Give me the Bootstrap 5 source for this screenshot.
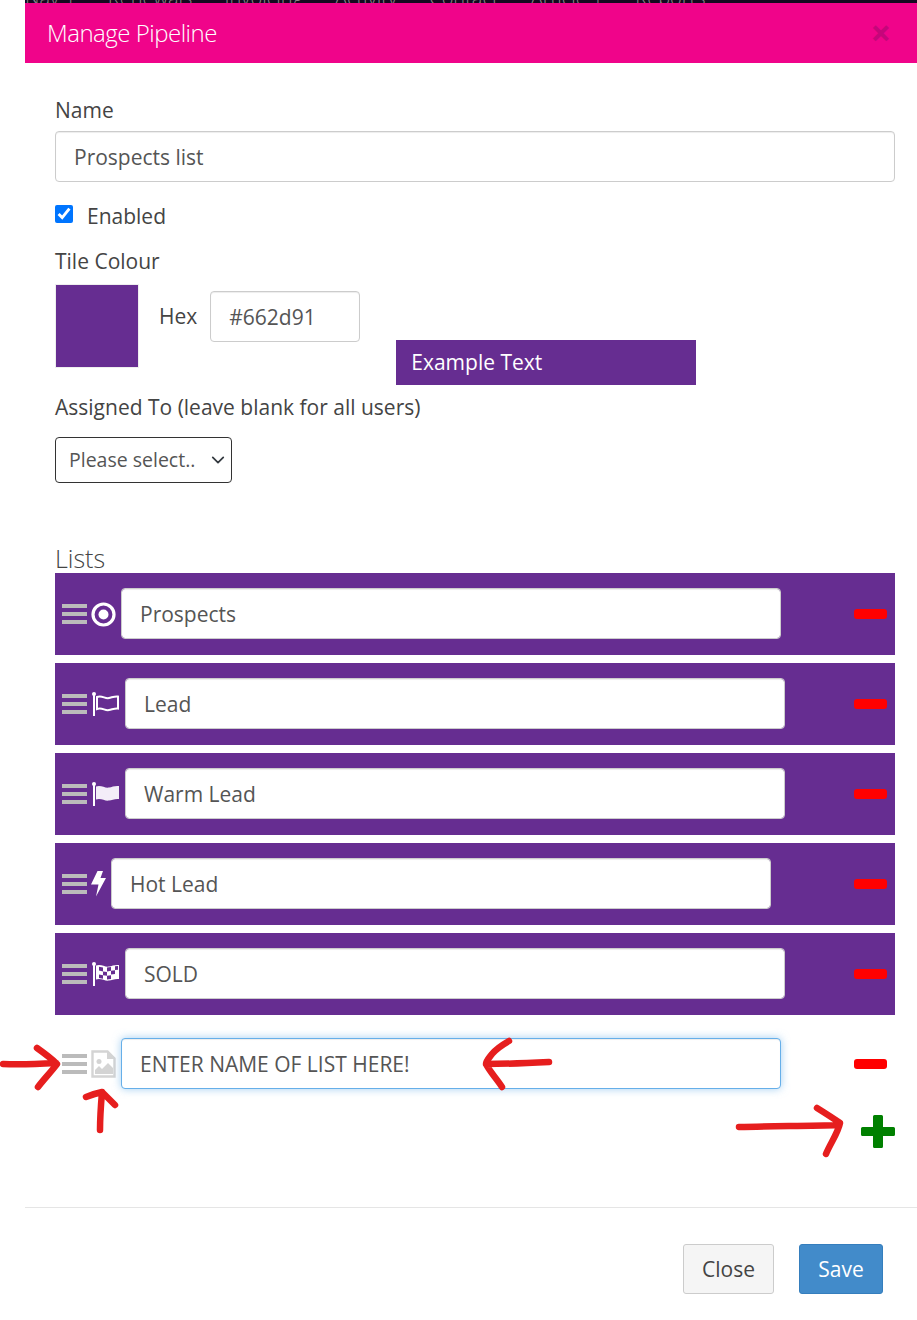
<!DOCTYPE html>
<html lang="en">
<head>
<meta charset="utf-8">
<title>Manage Pipeline</title>
<link href="https://cdn.jsdelivr.net/npm/bootstrap@5.3.0/dist/css/bootstrap.min.css" rel="stylesheet">
<style>
html,body{margin:0;padding:0;background:#fff}
body{font-family:"Open Sans","Liberation Sans",sans-serif;font-size:21px;color:#444;height:1320px;overflow:hidden;position:relative}
.sheet{margin-left:25px;width:892px}
.strip{height:3px;background:#14091f;overflow:hidden;color:#8a8a8a;font-size:20px;font-weight:300;white-space:nowrap;display:flex;align-items:flex-end;gap:32px}
.strip span{line-height:10px;flex:none}
.head-bar{height:60px;background:#f0048a;color:#fff;padding:0 26px 0 22px}
.head-title{font-size:24px;font-weight:300;margin:0;line-height:60px;letter-spacing:-.5px}
.head-x{font-size:36px;color:#c5067a;line-height:1;background:none;border:0;padding:0;font-weight:700}
.form-area{padding:33px 22px 0 30px}
.lbl{display:block;line-height:28px;margin:0 0 7px}
.field.form-control{height:51px;border-radius:4px;border:1px solid #ccc;font-size:21px;color:#555;padding:0 18px;box-shadow:inset 0 1px 1px rgba(0,0,0,.075)}
.check-line{margin:20px 0 0;height:28px}
.check-native{width:18px;height:18px;margin:0 14px 4px 0;flex:none}
.check-line label{line-height:28px}
.lbl-tile{margin:17px 0 9px;line-height:28px;display:block}
.swatch{width:84px;height:84px;background:#662d91;border:1px solid #eee;flex:none}
.hex-word{margin:18px 13px 0 20px;line-height:28px}
.hex-input.form-control{width:150px;margin-top:7px;flex:none}
.sample{width:300px;height:45px;background:#662d91;color:#fff;line-height:45px;padding-left:15px;margin:56px 0 0 36px;flex:none}
.lbl-assign{margin:8px 0 16px;line-height:28px;display:block}
.pick.form-select{width:177px;height:46px;border:1px solid #333;border-radius:4px;font-size:19.500px;color:#555;padding:0 0 0 13px;background-position:right 4px center;background-size:18px 14px}
.lists-head{font-size:25px;font-weight:300;line-height:28px;margin:61px 0 0;height:29px}
.tier{height:82px;margin-bottom:8px;padding:0 8px 0 7px;display:flex;align-items:center}
.tier.tone{background:#662d91}
.grip{width:25px;height:20px;flex:none;margin-right:4px}
.glyph{flex:none;margin-right:5px;display:block}
.glyph-flag{margin-left:1px}
.tier .field{width:660px;flex:none;margin-top:-1px}
.tier .now.form-control{border-color:#66afe9;box-shadow:inset 0 1px 1px rgba(0,0,0,.075),0 0 8px rgba(102,175,233,.6)}
.minus{width:33px;height:10px;background:#f00;border-radius:3px;margin-left:auto;flex:none}
.add-wrap{display:flex;justify-content:flex-end;height:34px;margin-top:10px}
.foot-bar{border-top:1px solid #e5e5e5;margin-top:58px;padding:36px 34px 0 0;display:flex;justify-content:flex-end;gap:25px}
.act.btn{height:50px;font-size:21px;border-radius:3px;padding:0;line-height:48px}
.act-close.btn{background:#f5f5f5;border:1px solid #ccc;color:#444;width:91px}
.act-save.btn{background:#428bca;border:1px solid #357ebd;color:#fff;width:84px}
.scribble{position:absolute;left:0;top:0;pointer-events:none}
</style>
</head>
<body>
<div class="sheet">
  <div class="strip"><span>Nav 1</span><span>Renewals</span><span>Invoicing</span><span>Activity</span><span>Contact</span><span>Article 1</span><span>Reports</span></div>
  <div class="head-bar d-flex align-items-center justify-content-between">
    <h4 class="head-title">Manage Pipeline</h4>
    <button class="head-x" type="button" aria-label="Close">×</button>
  </div>
  <div class="form-area">
    <label class="lbl">Name</label>
    <input class="form-control field" value="Prospects list">
    <div class="check-line d-flex align-items-center">
      <input class="check-native" type="checkbox" checked id="en">
      <label for="en">Enabled</label>
    </div>
    <label class="lbl-tile">Tile Colour</label>
    <div class="d-flex align-items-start">
      <div class="swatch"></div>
      <span class="hex-word">Hex</span>
      <input class="form-control field hex-input" value="#662d91">
      <div class="sample">Example Text</div>
    </div>
    <label class="lbl-assign">Assigned To (leave blank for all users)</label>
    <select class="form-select pick"><option>Please select..</option></select>
    <div class="lists-head">Lists</div>

    <div class="tier tone">
      <svg class="grip" viewBox="0 0 25 20"><path fill="#bbb" d="M0 0h25v4H0zM0 8h25v4H0zM0 16h25v4H0z"/></svg>
      <svg class="glyph" width="25" height="25" viewBox="0 0 25 25"><circle cx="12.500" cy="12.500" r="10.500" fill="none" stroke="#fff" stroke-width="3.200"/><circle cx="12.500" cy="12.500" r="5" fill="#fff"/></svg>
      <input class="form-control field" value="Prospects">
      <div class="minus"></div>
    </div>
    <div class="tier tone">
      <svg class="grip" viewBox="0 0 25 20"><path fill="#bbb" d="M0 0h25v4H0zM0 8h25v4H0zM0 16h25v4H0z"/></svg>
      <svg class="glyph glyph-flag" width="28" height="24" viewBox="0 0 28 24"><circle cx="2" cy="2" r="2" fill="#fff"/><rect x="1" y="2" width="2" height="22" fill="#fff"/><path d="M5 5c5-2 8 2 12 1 3-.6 6-2 9-1.500v12c-3-.5-6 1-9 1.500-4 1-7-3-12-1z" fill="none" stroke="#fff" stroke-width="2"/></svg>
      <input class="form-control field" value="Lead">
      <div class="minus"></div>
    </div>
    <div class="tier tone">
      <svg class="grip" viewBox="0 0 25 20"><path fill="#bbb" d="M0 0h25v4H0zM0 8h25v4H0zM0 16h25v4H0z"/></svg>
      <svg class="glyph glyph-flag" width="28" height="24" viewBox="0 0 28 24"><circle cx="2" cy="2" r="2" fill="#fff"/><rect x="1" y="2" width="2" height="22" fill="#fff"/><path d="M4 4.500c5-2 9 2 13 1 3-.6 6-2 10-1.500v13c-4-.5-7 1-10 1.500-4 1-8-3-13-1z" fill="#f3edf8"/></svg>
      <input class="form-control field" value="Warm Lead">
      <div class="minus"></div>
    </div>
    <div class="tier tone">
      <svg class="grip" viewBox="0 0 25 20"><path fill="#bbb" d="M0 0h25v4H0zM0 8h25v4H0zM0 16h25v4H0z"/></svg>
      <svg class="glyph" width="15" height="26" viewBox="0 0 15 26"><path fill="#fff" d="M6.500 0h5.500L9.500 7H15L5 25.500l2.500-12H0z"/></svg>
      <input class="form-control field" value="Hot Lead">
      <div class="minus"></div>
    </div>
    <div class="tier tone">
      <svg class="grip" viewBox="0 0 25 20"><path fill="#bbb" d="M0 0h25v4H0zM0 8h25v4H0zM0 16h25v4H0z"/></svg>
      <svg class="glyph glyph-flag" width="28" height="24" viewBox="0 0 28 24"><circle cx="2" cy="2" r="2" fill="#fff"/><rect x="1" y="2" width="2" height="22" fill="#fff"/><path d="M4 3.500c5-2 9 2 13 1 3-.6 6-2 10-1.500v14c-4-.5-7 1-10 1.500-4 1-8-3-13-1z" fill="#fff"/><path fill="#662d91" d="M7 4.800l4 .8v3.800l-4-.8zM15 5.600l4-.7v3.800l-4 .7zM23 4.200l3-.2v3.800l-3 .2zM11 9.400l4 .6v3.800l-4-.6zM19 8.700l4-.5v3.800l-4 .5zM7 12.500l4 .7v3.600l-4-.9zM15 13.800l4-.6v3.700l-4 .7z"/></svg>
      <input class="form-control field" value="SOLD">
      <div class="minus"></div>
    </div>
    <div class="tier mb-0">
      <svg class="grip" viewBox="0 0 25 20"><path fill="#bbb" d="M0 0h25v4H0zM0 8h25v4H0zM0 16h25v4H0z"/></svg>
      <svg class="glyph" width="25" height="28" viewBox="0 0 25 28"><path fill="none" stroke="#d4d4d4" stroke-width="2.400" d="M1.500 1.500h15l7 7v18h-22z"/><path fill="#d4d4d4" d="M16 1.500v7.500h7.500zM4 24v-4l4-4 3 3 6-6 5 5v6z"/><circle cx="8" cy="11.500" r="2.500" fill="#d4d4d4"/></svg>
      <input class="form-control field now" value="ENTER NAME OF LIST HERE!">
      <div class="minus"></div>
    </div>
    <div class="add-wrap">
      <svg width="34" height="33" viewBox="0 0 34 33"><path fill="#008000" d="M12 1.500A1.500 1.500 0 0 1 13.500 0h7A1.500 1.500 0 0 1 22 1.500v10.500h10.500A1.500 1.500 0 0 1 34 13.500v6a1.500 1.500 0 0 1-1.500 1.500H22v10.500a1.500 1.500 0 0 1-1.500 1.500h-7a1.500 1.500 0 0 1-1.500-1.500V21H1.500A1.500 1.500 0 0 1 0 19.500v-6A1.500 1.500 0 0 1 1.500 12H12z"/></svg>
    </div>
  </div>
  <div class="foot-bar">
    <button class="btn act act-close" type="button">Close</button>
    <button class="btn act act-save" type="button">Save</button>
  </div>
</div>
<svg class="scribble" width="917" height="1320" viewBox="0 0 917 1320" fill="none" stroke="#e61e1e" stroke-width="6.500" stroke-linecap="round" stroke-linejoin="round">
  <path d="M3 1064c18 1 36 0 53-1M37 1048c7 5 14 10 20 16-6 8-13 15-19 23"/>
  <path d="M100 1130c0-13 1-26 2-38M86 1097c5-2 11-4 16-5 4 4 9 9 13 13"/>
  <path d="M549 1062c-20 1-42 2-63 2M509 1041c-7 4-13 8-17 13-3 4-6 7-6 10 4 8 11 15 16 23"/>
  <path d="M739 1127c33-1 67-1 100-2M817 1108c8 5 16 10 23 15-2 10-10 21-14 31"/>
</svg>
</body>
</html>
